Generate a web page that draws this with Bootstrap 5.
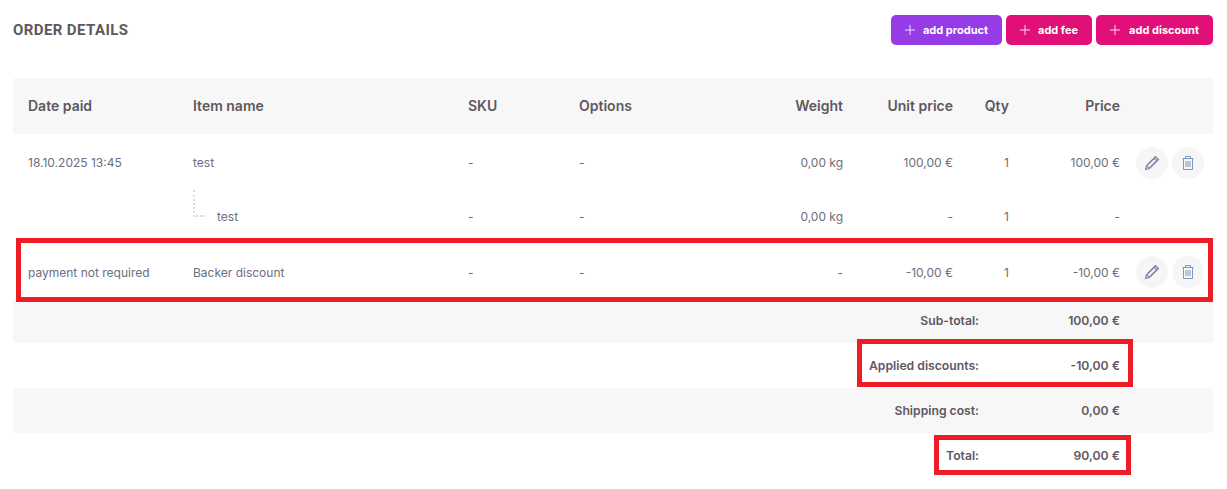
<!DOCTYPE html>
<html lang="en">
<head>
  <meta charset="UTF-8" />
  <meta name="viewport" content="width=device-width, initial-scale=1" />
  <title>Order details</title>
  <link href="https://cdn.jsdelivr.net/npm/bootstrap@5.3.3/dist/css/bootstrap.min.css" rel="stylesheet">
  <style>
    body { font-family: Inter, "Liberation Sans", sans-serif; background: #fff; color: #6c6e7e; overflow: hidden; }
    .order-page { position: relative; padding: 15px 14px 0 13px; }
    .order-title { font-family: Roboto, "Liberation Sans", sans-serif; font-size: 15px; font-weight: 700; letter-spacing: .4px; color: #5e585e; margin: 0; }
    .add-btn { height: 30px; padding: 0 14px; border: 0; border-radius: 5px; color: #fff; font-size: 11px; font-weight: 700; gap: 8px; }
    .add-wide { gap: 9px; }
    .add-purple { background: #963ce6; }
    .add-pink { background: #e01078; }
    .add-btn svg { width: 10px; height: 10px; }
    .order-table { table-layout: fixed; width: 1200px; margin: 33px 0 0; font-size: 12px; border-collapse: separate; border-spacing: 0; }
    .w-date { width: 165px; }
    .w-item { width: 275px; }
    .w-sku { width: 111px; }
    .w-opts { width: 150px; }
    .w-weight { width: 144px; }
    .w-unit { width: 110px; }
    .w-qty { width: 56px; }
    .w-price { width: 111px; }
    .w-act { width: 78px; }
    .order-table td, .order-table th { padding: 0 15px; vertical-align: middle; background: transparent; color: #6c6e7e; box-shadow: none; border: 0; }
    .order-table th { height: 56px; padding-bottom: 1px; font-size: 14px; font-weight: 600; color: #5e585e; }
    .order-table thead th, .stripe-row td { background: #f7f7f7; }
    .order-table thead th:first-child, .stripe-row td:first-child { border-radius: 3px 0 0 3px; }
    .order-table thead th:last-child, .stripe-row td:last-child { border-radius: 0 3px 3px 0; }
    .order-table .row-a td { height: 56px; padding-top: 1px; }
    .row-b td { height: 54px; }
    .order-table .row-c td { height: 54px; padding-top: 3px; }
    .order-table .sum-row td { height: 45px; padding-top: 1px; font-weight: 600; font-size: 12.2px; color: #5e585e; }
    .order-table .sum-row td.sum-label { padding-right: 45px; text-align: right; }
    .order-table .row-a td.act-cell { padding: 1px 0 0 1px; }
    .order-table .row-c td.act-cell { padding: 2px 0 0 1px; }
    .round-btn { width: 32px; height: 32px; border: 0; padding: 0; border-radius: 50%; background: #f6f6f6; }
    .round-btn svg { width: 16px; height: 16px; }
    .child-wrap { height: 54px; }
    .child-line { width: 12px; height: 27px; border-left: 2px dotted #dcdcdc; border-bottom: 2px dotted #dcdcdc; }
    .child-name { margin-left: 12px; padding-top: 18px; }
    .red-box { position: absolute; border: 5px solid #ee1c25; pointer-events: none; }
    .box-row { left: 16px; top: 238px; width: 1197px; height: 64px; }
    .box-discount { left: 857px; top: 339px; width: 276px; height: 48px; }
    .box-total { left: 934px; top: 435px; width: 197px; height: 40px; }
  </style>
</head>
<body>
  <div class="order-page">
    <div class="d-flex justify-content-between align-items-center">
      <h5 class="order-title">ORDER DETAILS</h5>
      <div class="d-flex gap-1">
        <button class="btn add-btn add-purple d-flex align-items-center"><svg viewBox="0 0 10 10"><path d="M5 0v10M0 5h10" stroke="#f3dcff" stroke-width="1"/></svg>add product</button>
        <button class="btn add-btn add-pink d-flex align-items-center"><svg viewBox="0 0 10 10"><path d="M5 0v10M0 5h10" stroke="#ffd6ea" stroke-width="1"/></svg>add fee</button>
        <button class="btn add-btn add-wide add-pink d-flex align-items-center"><svg viewBox="0 0 10 10"><path d="M5 0v10M0 5h10" stroke="#ffd6ea" stroke-width="1"/></svg>add discount</button>
      </div>
    </div>

    <table class="table table-borderless order-table">
      <colgroup>
        <col class="w-date"><col class="w-item"><col class="w-sku"><col class="w-opts"><col class="w-weight"><col class="w-unit"><col class="w-qty"><col class="w-price"><col class="w-act">
      </colgroup>
      <thead>
        <tr>
          <th>Date paid</th><th>Item name</th><th>SKU</th><th>Options</th>
          <th class="text-end">Weight</th><th class="text-end">Unit price</th><th class="text-end">Qty</th><th class="text-end">Price</th><th></th>
        </tr>
      </thead>
      <tbody>
        <tr class="row-a">
          <td>18.10.2025 13:45</td><td>test</td><td>-</td><td>-</td>
          <td class="text-end">0,00 kg</td><td class="text-end">100,00 €</td><td class="text-end">1</td><td class="text-end">100,00 €</td>
          <td class="act-cell">
            <div class="d-flex gap-1">
              <button class="round-btn d-flex align-items-center justify-content-center" aria-label="Edit"><svg viewBox="0 0 16 16" fill="none" stroke="#7c84a0" stroke-width="1.1"><path d="M1.500 14.500l1-4L11.500 1.500l3 3-9 9z"/><path d="M2.500 10.500l3 3M10 3l3 3M4 9.500l7.500-7.500M6.500 12l7.500-7.500"/></svg></button>
              <button class="round-btn d-flex align-items-center justify-content-center" aria-label="Delete"><svg viewBox="0 0 16 16" fill="none" stroke="#7f98c0" stroke-width="1"><path d="M2.500 3.500h11M5.500 3.500V1.500h5v2M3.500 3.500v11h9v-11M6 6v6M8 6v6M10 6v6"/></svg></button>
            </div>
          </td>
        </tr>
        <tr class="row-b">
          <td></td>
          <td class="py-0"><div class="child-wrap d-flex"><div class="child-line"></div><div class="child-name">test</div></div></td>
          <td>-</td><td>-</td>
          <td class="text-end">0,00 kg</td><td class="text-end">-</td><td class="text-end">1</td><td class="text-end">-</td><td></td>
        </tr>
        <tr class="row-c">
          <td>payment not required</td><td>Backer discount</td><td>-</td><td>-</td>
          <td class="text-end">-</td><td class="text-end">-10,00 €</td><td class="text-end">1</td><td class="text-end">-10,00 €</td>
          <td class="act-cell">
            <div class="d-flex gap-1">
              <button class="round-btn d-flex align-items-center justify-content-center" aria-label="Edit"><svg viewBox="0 0 16 16" fill="none" stroke="#7c84a0" stroke-width="1.1"><path d="M1.500 14.500l1-4L11.500 1.500l3 3-9 9z"/><path d="M2.500 10.500l3 3M10 3l3 3M4 9.500l7.500-7.500M6.500 12l7.500-7.500"/></svg></button>
              <button class="round-btn d-flex align-items-center justify-content-center" aria-label="Delete"><svg viewBox="0 0 16 16" fill="none" stroke="#7f98c0" stroke-width="1"><path d="M2.500 3.500h11M5.500 3.500V1.500h5v2M3.500 3.500v11h9v-11M6 6v6M8 6v6M10 6v6"/></svg></button>
            </div>
          </td>
        </tr>
        <tr class="sum-row stripe-row"><td colspan="7" class="sum-label">Sub-total:</td><td class="text-end">100,00 €</td><td></td></tr>
        <tr class="sum-row"><td colspan="7" class="sum-label">Applied discounts:</td><td class="text-end">-10,00 €</td><td></td></tr>
        <tr class="sum-row stripe-row"><td colspan="7" class="sum-label">Shipping cost:</td><td class="text-end">0,00 €</td><td></td></tr>
        <tr class="sum-row"><td colspan="7" class="sum-label">Total:</td><td class="text-end">90,00 €</td><td></td></tr>
      </tbody>
    </table>

    <div class="red-box box-row"></div>
    <div class="red-box box-discount"></div>
    <div class="red-box box-total"></div>
  </div>
</body>
</html>
